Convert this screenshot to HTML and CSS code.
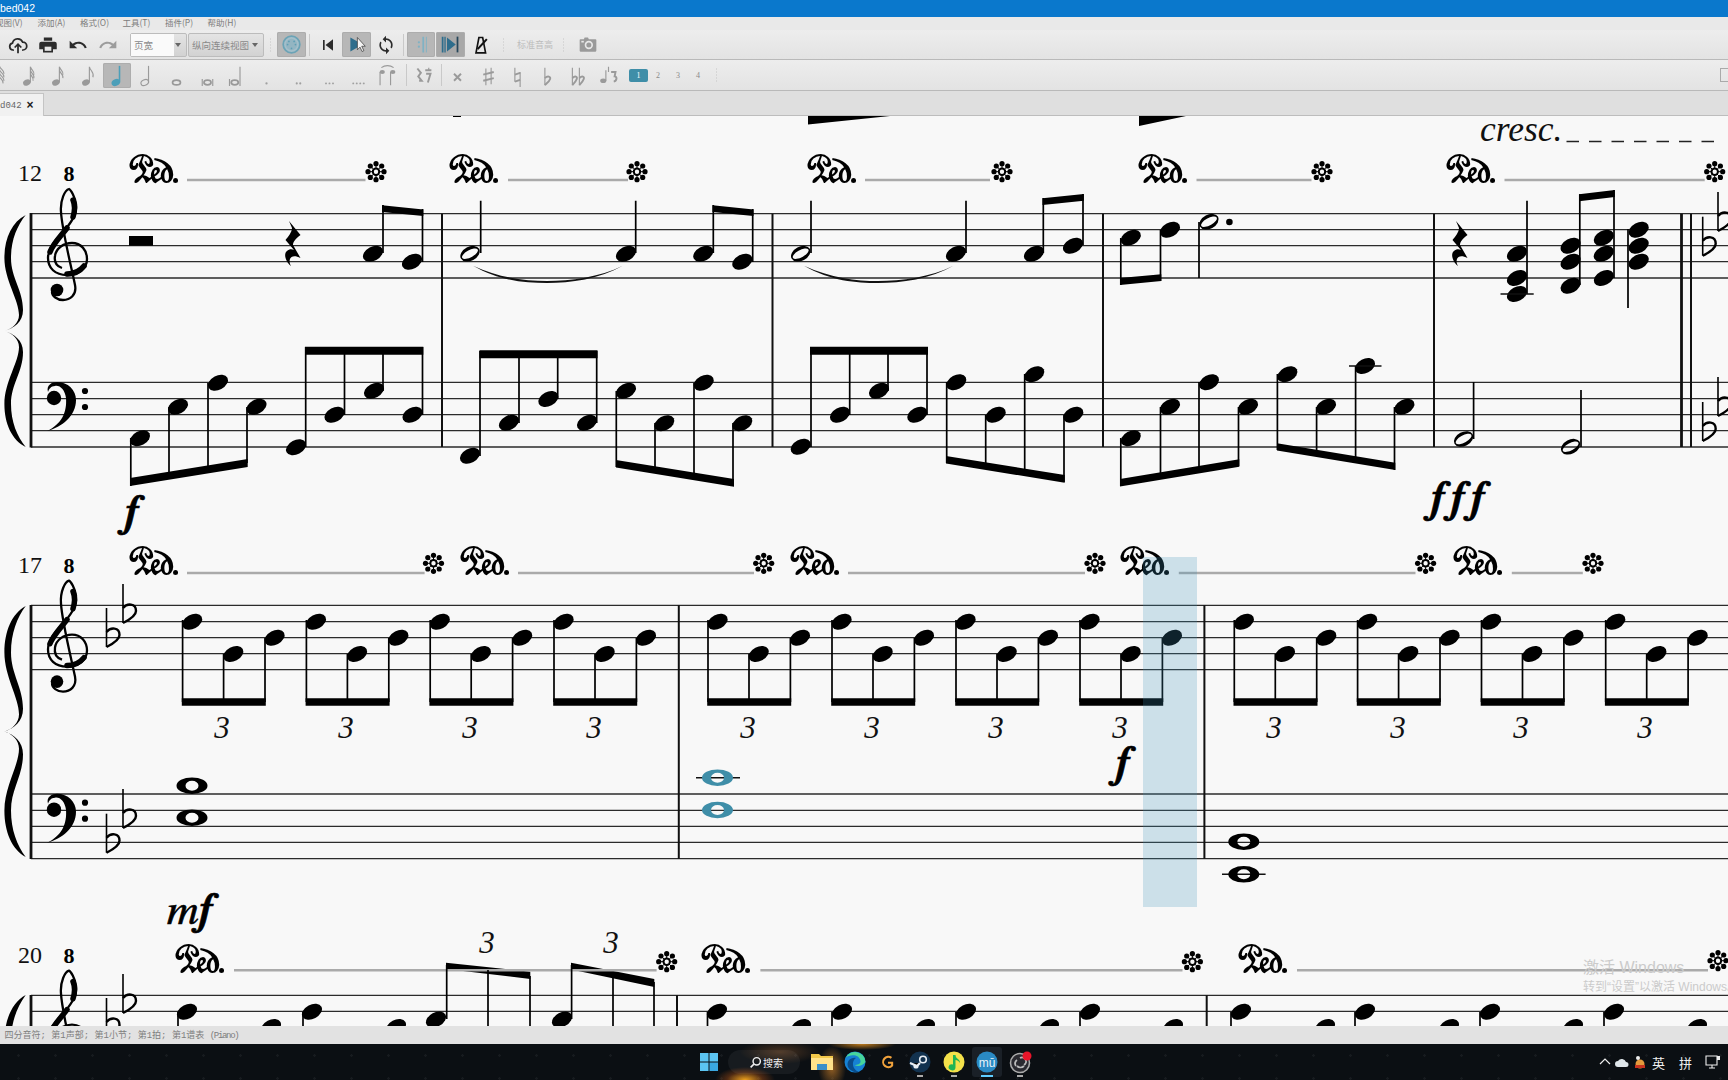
FILE: index.html
```html
<!DOCTYPE html>
<html lang="zh">
<head>
<meta charset="utf-8">
<title>MuseScore</title>
<link rel="stylesheet" href="styles.css">
</head>
<body>
<div class="app">
  <header class="titlebar"><span>bed042</span></header>
  <nav class="menubar">
    <span class="m m0">视图(V)</span><span class="m">添加(A)</span><span class="m">格式(O)</span><span class="m">工具(T)</span><span class="m">插件(P)</span><span class="m">帮助(H)</span>
  </nav>
  <div class="toolbar tb1">
    <div class="tb w30"><svg class="ic" viewBox="0 0 24 24"><path class="st" d="M7 18H6a4.2 4.2 0 0 1-.6-8.3A6.4 6.4 0 0 1 17.6 8.6 4.6 4.6 0 0 1 18 18h-1"/><path class="st" d="M12 22V11M8 15l4-4 4 4"/></svg></div>
    <div class="tb w30"><svg class="ic" viewBox="0 0 24 24"><path class="fd" d="M7 3h10v4H7zM4 8h16a2.500 2.500 0 0 1 2.500 2.500V17H18v4H6v-4H1.500v-6.500A2.500 2.500 0 0 1 4 8z"/><path class="fbg" d="M8 14h8v5H8z"/></svg></div>
    <div class="tb w30"><svg class="ic" viewBox="0 0 24 24"><path class="fd" d="M12.500 8c-2.650 0-5.050 1-6.900 2.600L2 7v9h9l-3.620-3.620c1.390-1.160 3.160-1.880 5.120-1.880 3.540 0 6.550 2.310 7.600 5.500l2.370-.78C21.080 11.030 17.150 8 12.500 8z"/></svg></div>
    <div class="tb w30"><svg class="ic" viewBox="0 0 24 24"><path class="fg" d="M18.400 10.600C16.550 9 14.150 8 11.500 8c-4.650 0-8.580 3.030-9.960 7.220L3.900 16c1.050-3.190 4.050-5.500 7.600-5.500 1.950 0 3.730.72 5.120 1.880L13 16h9V7l-3.600 3.600z"/></svg></div>
    <div class="combo c1"><span class="cinput">页宽</span><span class="carrow"></span></div>
    <div class="combo c2"><span class="ctext">纵向连续视图</span><span class="carrow"></span></div>
    <div class="handle w13"></div>
    <div class="tb w29 on"><svg class="ic big" viewBox="0 0 24 24"><circle cx="12" cy="12" r="9.500" fill="#a4bfca" stroke="#6ba3b6" stroke-width="2"/><circle cx="12" cy="12" r="6.500" fill="#93b5c2"/><g fill="#5f9fb5"><circle cx="7.500" cy="12" r="1"/><circle cx="16.500" cy="12" r="1"/><circle cx="9" cy="8.500" r="1"/><circle cx="15" cy="8.500" r="1"/><circle cx="12" cy="16.500" r="1"/></g></svg></div>
    <div class="sep w7"></div>
    <div class="tb w29"><svg class="ic" viewBox="0 0 24 24"><path class="fd" d="M6 6h2v12H6zM18 5v14L9 12z"/></svg></div>
    <div class="tb w29 on"><svg class="ic big" viewBox="0 0 24 24"><path fill="#2e6d8c" d="M5 4l14 8-14 8z"/><path fill="#f4f4f4" stroke="#333" stroke-width=".8" d="M13 4v14l3-3 2.400 5 2-1-2.400-5h4z"/></svg></div>
    <div class="tb w29"><svg class="ic" viewBox="0 0 24 24"><path class="fd" d="M12 4V1L8 5l4 4V6c3.310 0 6 2.690 6 6 0 1.010-.25 1.970-.7 2.800l1.460 1.460C19.540 15.030 20 13.570 20 12c0-4.420-3.580-8-8-8zm0 14c-3.310 0-6-2.690-6-6 0-1.010.25-1.970.7-2.800L5.240 7.740C4.460 8.970 4 10.430 4 12c0 4.420 3.580 8 8 8v3l4-4-4-4v3z"/></svg></div>
    <div class="sep w7"></div>
    <div class="tb w28 on"><svg class="ic big" viewBox="0 0 24 24"><path fill="#7fb2c4" d="M13 3h2v18h-2zM17 3h1v18h-1z"/><circle cx="9" cy="9.500" r="1.300" fill="#7fb2c4"/><circle cx="9" cy="14.500" r="1.300" fill="#7fb2c4"/></svg></div>
    <div class="tb w29 on dark"><svg class="ic big" viewBox="0 0 24 24"><path fill="#2e6d8c" d="M2 3h2v18H2zM5 3h1.500v18H5zM8 4l10 8-10 8z"/><path fill="#26465a" d="M19 3h2v18h-2z"/></svg></div>
    <div class="tb w31"><svg class="ic" viewBox="0 0 24 24"><path fill="none" stroke="#111" stroke-width="2" d="M6 21.500 9.500 3h4.500l3.500 18.500z"/><path stroke="#111" stroke-width="2.500" d="M8 17 19 5"/></svg></div>
    <div class="handle w14"></div>
    <div class="dis">标准音高</div>
    <div class="handle w21"></div>
    <div class="tb w27"><svg class="ic" viewBox="0 0 24 24"><path fill="#9a9a9a" d="M3 5h4l1-2h4l1 2h8a1 1 0 0 1 1 1v13a1 1 0 0 1-1 1H3a1 1 0 0 1-1-1V6a1 1 0 0 1 1-1z"/><circle cx="13" cy="12" r="5" fill="#e8e8e8"/><circle cx="13" cy="12" r="3" fill="#9a9a9a"/><path fill="#e8e8e8" d="M4 7h3v2H4z"/></svg></div>
  </div>
  <div class="toolbar tb2">
    <div class="tb w14 first"><svg class="ic2" viewBox="0 0 24 28"><path class="gst" d="M13 23V3M13 3c1 4 6 5 5 9M13 7c1 4 6 5 5 9M13 11c1 4 6 5 5 9M13 15c1 3 5 4 4 8"/></svg></div>
    <div class="tb w30"><svg class="ic2" viewBox="0 0 24 28"><ellipse class="hd" cx="9" cy="22" rx="4.500" ry="3.400" transform="rotate(-25 9 22)"/><path class="gst" d="M13 22V4M13 4c1 4 5 5 4 9M13 8c1 4 5 5 4 9M13 12c1 3 4 4 3 8"/></svg></div>
    <div class="tb w29"><svg class="ic2" viewBox="0 0 24 28"><ellipse class="hd" cx="9" cy="22" rx="4.500" ry="3.400" transform="rotate(-25 9 22)"/><path class="gst" d="M13 22V4M13 4c1 4 5 5 4 9M13 8c1 4 5 5 4 9"/></svg></div>
    <div class="tb w30"><svg class="ic2" viewBox="0 0 24 28"><ellipse class="hd" cx="9" cy="22" rx="4.500" ry="3.400" transform="rotate(-25 9 22)"/><path class="gst" d="M13 22V4M13 4c1 5 6 6 4 12"/></svg></div>
    <div class="tb w28 on"><svg class="ic2" viewBox="0 0 24 28"><ellipse cx="10" cy="22" rx="5" ry="3.800" transform="rotate(-25 10 22)" fill="#4c9fb9"/><path fill="none" stroke="#4c9fb9" stroke-width="1.800" d="M14.300 22V3"/></svg></div>
    <div class="tb w30"><svg class="ic2" viewBox="0 0 24 28"><ellipse class="hl" cx="10" cy="22" rx="4.500" ry="3.200" transform="rotate(-25 10 22)"/><path class="gst" d="M14.300 22V3"/></svg></div>
    <div class="tb w31"><svg class="ic2" viewBox="0 0 24 28"><ellipse cx="12" cy="22" rx="4.500" ry="2.800" fill="none" stroke="#999" stroke-width="2"/></svg></div>
    <div class="tb w30"><svg class="ic2" viewBox="0 0 24 28"><ellipse cx="12" cy="22" rx="4" ry="2.600" fill="none" stroke="#999" stroke-width="2"/><path class="gst" d="M6 18v8M18 18v8"/></svg></div>
    <div class="tb w29"><svg class="ic2" viewBox="0 0 24 28"><ellipse cx="10" cy="22" rx="4" ry="2.600" fill="none" stroke="#999" stroke-width="2"/><path class="gst" d="M4 18v8M16 4v22"/></svg></div>
    <div class="tb w31"><svg class="ic2" viewBox="0 0 24 28"><circle class="dt" cx="12" cy="23" r="1.300"/></svg></div>
    <div class="tb w32"><svg class="ic2" viewBox="0 0 24 28"><circle class="dt" cx="10" cy="23" r="1.200"/><circle class="dt" cx="14" cy="23" r="1.200"/></svg></div>
    <div class="tb w30"><svg class="ic2" viewBox="0 0 24 28"><circle class="dt" cx="8" cy="23" r="1.100"/><circle class="dt" cx="12" cy="23" r="1.100"/><circle class="dt" cx="16" cy="23" r="1.100"/></svg></div>
    <div class="tb w28"><svg class="ic2" viewBox="0 0 24 28"><circle class="dt" cx="6" cy="23" r="1.100"/><circle class="dt" cx="10" cy="23" r="1.100"/><circle class="dt" cx="14" cy="23" r="1.100"/><circle class="dt" cx="18" cy="23" r="1.100"/></svg></div>
    <div class="tb w30"><svg class="ic2" viewBox="0 0 24 28"><ellipse class="hd" cx="6" cy="10" rx="3" ry="2.400"/><ellipse class="hd" cx="18" cy="10" rx="3" ry="2.400"/><path class="gst" d="M3.500 10V25M15.500 10V25M5 5c4-3 10-3 14 0"/></svg></div>
    <div class="sep w8"></div>
    <div class="tb w26"><svg class="ic2" viewBox="0 0 24 28"><path class="gst thick" d="M5 6l4 5-3 4 4 5-3 0M14 8h7M15 12h5l-3 10"/><path class="gst" d="M18 5v3"/></svg></div>
    <div class="sep w10"></div>
    <div class="tb w22"><svg class="ic2" viewBox="0 0 24 28"><path class="gst thick" d="M8 12l8 8M16 12l-8 8"/></svg></div>
    <div class="tb w40"><svg class="ic2" viewBox="0 0 24 28"><path class="gst" d="M9 6v19M15 5v19"/><path class="gst thick" d="M6 13l12-3M6 20l12-3"/></svg></div>
    <div class="tb w18"><svg class="ic2" viewBox="0 0 24 28"><path class="gst" d="M9 5v16M15 10v17"/><path class="gst thick" d="M9 13l6-2M9 21l6-2"/></svg></div>
    <div class="tb w42"><svg class="ic2" viewBox="0 0 24 28"><path class="gst" d="M9 5v20"/><path class="gst thick" d="M9 17c3-3 7-2 6 1-1 3-4 5-6 7"/></svg></div>
    <div class="tb w20"><svg class="ic2" viewBox="0 0 24 28"><path class="gst" d="M5 5v20M13 5v20"/><path class="gst thick" d="M5 17c3-3 6-2 5 1-1 3-3 5-5 7M13 17c3-3 6-2 5 1-1 3-3 5-5 7"/></svg></div>
    <div class="tb w40"><svg class="ic2" viewBox="0 0 24 28"><ellipse class="hd" cx="6" cy="20" rx="3.500" ry="2.600"/><path class="gst" d="M9 20V8M12 4v6"/><path class="gst thick" d="M15 10h5l-1 5c3 0 3 5-1 6"/></svg></div>
    <div class="voice act">1</div>
    <div class="voice">2</div>
    <div class="voice">3</div>
    <div class="voice">4</div>
    <div class="handle w16"></div>
    <div class="tail"></div>
  </div>
  <div class="tabbar"><div class="tab"><span>d042</span><b>×</b></div></div>

  <main class="score">
    <svg class="sheet" viewBox="0 116 1728 910" width="1728" height="910">
      <defs>
        <g id="h"><ellipse rx="10.700" ry="7.100" transform="rotate(-28)"/></g>
        <g id="hh"><path fill-rule="evenodd" transform="rotate(-28)" d="M-10.300 0a10.300 7 0 1 0 20.600 0a10.300 7 0 1 0-20.600 0zM-8.800 .2a8.800 3.600 0 1 1 17.600-.4a8.800 3.600 0 1 1-17.600 .4z"/></g>
        <path id="w" fill-rule="evenodd" d="M-15.500 0a15.500 8.300 0 1 0 31 0a15.500 8.300 0 1 0-31 0zM-6.500 0a6.500 5 0 1 1 13 0a6.500 5 0 1 1-13 0z"/>
        <g id="flat"><path class="nf st16" d="M0 0V-39"/><path class="nf st26" d="M0-15C4-20 13-20 13-12C13-7 6-3 0 0"/></g>
        <g id="star">
          <circle cx="8" r="2.600"/><circle cx="5.700" cy="5.700" r="2.600"/><circle cy="8" r="2.600"/><circle cx="-5.700" cy="5.700" r="2.600"/><circle cx="-8" r="2.600"/><circle cx="-5.700" cy="-5.700" r="2.600"/><circle cy="-8" r="2.600"/><circle cx="5.700" cy="-5.700" r="2.600"/>
          <path class="nf st1" d="M-8 0H8M0-8V8M-5.700-5.700 5.700 5.700M-5.700 5.700 5.700-5.700"/>
          <circle class="hub" r="3.200"/>
        </g>
        <g id="treble">
          <path class="nf st25" d="M62 268C56 266 54 262 55 256C56 248 64 243 72 243C81 243 87 250 87 259C87 269 78 275 67 275C55 275 48 268 48 258C48 246 60 236 68 226C74 218 77 212 76 204C75 197 71 190 69 189C65 190 60 200 61 212C62 230 72 270 75 285C77 295 70 300 63 300C57 300 52 296 52 292"/>
          <path class="nf st6" d="M50 252C53 244 61 236 67 228M73 217C75 211 75 205 73 200M84 266C80 271 74 274 67 274"/>
          <circle cx="57" cy="290" r="6.300"/>
        </g>
        <g id="bass">
          <path d="M47 431C62 424 67 412 66 398C65 390 60 385 55 386C51 386 49 389 48 392C46 385 52 382 57 382C68 382 76 390 76 400C76 416 62 427 47 431Z"/>
          <circle cx="54" cy="398" r="7.200"/>
          <circle cx="85" cy="391" r="3.100"/><circle cx="85" cy="407" r="3.100"/>
        </g>
        <path id="brace" d="M25.700 215C12 222 4.400 238 4.400 258C4.400 280 19 300 19 315C19 323 12 329 4.400 331C12 333 19 339 19 347C19 362 4.400 382 4.400 404C4.400 424 12 440 25.700 447C17 436 11 422 11 404C11 384 23 372 23 352C23 340 14 334 4.400 331C14 328 23 322 23 310C23 290 11 278 11 258C11 240 17 226 25.700 215Z"/>
        <path id="qrest" d="M289 221L300.500 235C296 238 293 242 293 245L300.500 258C295 255 291 256 290 259C289 262 290 264 291 266C286 262 283 254 287 251C289 249 292 249 294 250L285.500 240C288 237 292 232 292 228Z"/>
        <g id="trip">
          <use href="#h" x="9.600" y="621.700"/><use href="#h" x="50.700" y="654"/><use href="#h" x="92" y="637.700"/>
          <path class="stem" d="M0 620V702M41 654V702M82.400 638V702"/>
          <path d="M-.8 698.300H83.200V705.700H-.8z"/>
        </g>
      </defs>

      <path class="staff" d="M31 213.700H1728M31 229.700H1728M31 245.700H1728M31 261.700H1728M31 278H1728M31 382.300H1728M31 398.700H1728M31 414.700H1728M31 430.700H1728M31 447H1728"/>
      <path class="bar" d="M442 213.700V447M772.500 213.700V447M1103 213.700V447M1434 213.700V447M1691 213.700V447"/>
      <path class="barb" d="M31 213V447.500M1681.500 213.700V447"/>
      <use href="#brace"/>
      <use href="#treble"/><use href="#bass"/>
      <text class="num" x="18" y="181">12</text>
      <text class="oct" x="69" y="181">8</text>

      <text class="cresc" x="1480" y="141">cresc.</text>
      <path class="dash" d="M1566.500 141.500H1715"/>
      <path d="M808 116H890L808 124.500zM1139 116H1186L1139 126zM453 116H461V117H453z"/>

      <text class="ped" x="128" y="207">&#x1D1AE;</text>
      <text class="ped" x="448" y="207">&#x1D1AE;</text>
      <text class="ped" x="806" y="207">&#x1D1AE;</text>
      <text class="ped" x="1137" y="207">&#x1D1AE;</text>
      <text class="ped" x="1444.600" y="207">&#x1D1AE;</text>
      <path class="pl" d="M187 180H365.500M508 180H628M865 180H990M1196.500 180H1311.500M1504.500 180H1704.700"/>
      <use href="#star" x="376" y="171.700"/><use href="#star" x="637" y="171.700"/><use href="#star" x="1002" y="171.700"/><use href="#star" x="1322" y="171.700"/><use href="#star" x="1714.700" y="171.700"/>

      <path d="M129 236H153V245.700H129z"/>
      <use href="#qrest"/><use href="#qrest" x="1167"/>

      <use href="#h" x="373" y="253.700"/><use href="#h" x="412" y="261.700"/>
      <use href="#hh" x="470" y="253.700"/><use href="#h" x="626" y="253.700"/><use href="#h" x="703.300" y="253.700"/><use href="#h" x="742.300" y="261.700"/>
      <use href="#hh" x="800.700" y="253.700"/><use href="#h" x="956" y="253.700"/><use href="#h" x="1034" y="253.700"/><use href="#h" x="1073" y="245.700"/>
      <use href="#h" x="1130.800" y="237.700"/><use href="#h" x="1170" y="229.700"/><use href="#hh" x="1209" y="221.700"/>
      <circle cx="1229.400" cy="222" r="3.300"/>
      <use href="#h" x="1517" y="253.700"/><use href="#h" x="1517" y="278"/><use href="#h" x="1517" y="294"/>
      <use href="#h" x="1570.600" y="245.700"/><use href="#h" x="1570.600" y="261.700"/><use href="#h" x="1570.600" y="285.700"/>
      <use href="#h" x="1603.800" y="237.700"/><use href="#h" x="1603.800" y="253.700"/><use href="#h" x="1603.800" y="278"/>
      <use href="#h" x="1638.700" y="229.700"/><use href="#h" x="1638.700" y="245.700"/><use href="#h" x="1638.700" y="261.700"/>

      <use href="#h" x="140" y="438.300"/><use href="#h" x="178" y="406.700"/><use href="#h" x="218" y="382.700"/><use href="#h" x="256.500" y="406.700"/>
      <use href="#h" x="296" y="447.300"/><use href="#h" x="334.500" y="414.700"/><use href="#h" x="374" y="390.700"/><use href="#h" x="412.500" y="414.700"/>
      <use href="#h" x="470" y="455.700"/><use href="#h" x="509" y="422.700"/><use href="#h" x="548.300" y="399"/><use href="#h" x="587" y="422.700"/>
      <use href="#h" x="626" y="390.700"/><use href="#h" x="664.300" y="423.300"/><use href="#h" x="703.700" y="382.700"/><use href="#h" x="742.300" y="423.300"/>
      <use href="#h" x="800.700" y="446.700"/><use href="#h" x="840" y="414.700"/><use href="#h" x="879" y="390.700"/><use href="#h" x="917.300" y="414.700"/>
      <use href="#h" x="956.300" y="382.300"/><use href="#h" x="995.700" y="414.700"/><use href="#h" x="1034.300" y="374.300"/><use href="#h" x="1073.300" y="414.700"/>
      <use href="#h" x="1130.800" y="438.300"/><use href="#h" x="1170" y="406.700"/><use href="#h" x="1209" y="382.300"/><use href="#h" x="1248" y="406.700"/>
      <use href="#h" x="1287.400" y="374.300"/><use href="#h" x="1326" y="406.700"/><use href="#h" x="1365" y="366"/><use href="#h" x="1404.400" y="406.700"/>
      <use href="#hh" x="1463.600" y="439"/><use href="#hh" x="1570.600" y="446.700"/>

      <path class="stem" d="M383 253V205M422.500 262V209M480.700 253V200.700M635.700 253V200.700M713.300 253V205M752.700 262V209M811 253V200.700M966 253V200.700M1043.300 253V198M1083 245V194M1120.800 238V285M1160.500 230V281M1199 222V278M1527 294V200.700M1579.800 285V194.300M1614 278V190M1628 229V308
      M130.800 438V486M169 407V474M208 383V468M247 407V463M305.700 447V347M344.500 415V350M383 391V350M422.500 415V347
      M480 456V351M519 423V352M557.700 399V352M596.700 423V351M616.300 391V467M655 423V470M694 383V476M733 423V486
      M811 447V347M849.700 415V350M888 391V350M927 415V347M946.700 382V463M985.700 415V468M1024.700 374V474M1064 415V482
      M1120.800 438V486M1160.500 407V478M1199 382V472M1238.500 407V466M1277.400 374V450M1316.600 407V456M1355.600 366V462M1394.500 407V470
      M1473.600 439V382M1581 447V390"/>
      <path class="led" d="M1349 366H1381.500M1500.500 294H1533.700"/>
      <path d="M382 205.300L423.300 209.500V216L382 212zM712.500 205.300L753.500 209.500V216L712.500 212zM1042.500 198.300L1083.800 194V200.700L1042.500 205zM1120 278L1161.300 274.300V281L1120 285zM1579 194.300L1614.800 190V197L1579 201.300z
      M130 478L247.700 459V467L130 486zM305 346.700H423.300V354.700H305zM479.500 350.300H597.500V358.300H479.500zM616 460L734 479V486.700L616 467.500zM810 346.700H928V354.700H810zM946 456L1064.700 475V482.700L946 463.500zM1120 479L1239.300 459.300V466.700L1120 486.500zM1277 443.300L1395.300 462.700V470L1277 450.500z"/>
      <path class="tie" d="M473 265.700C500 281 525 283 547 283C570 283 600 279 622.700 265.700C600 277 570 281 547 281C525 281 500 278 473 265.700Z"/>
      <path class="tie" d="M804 265.700C831 281 856 283 878 283C901 283 931 279 953.300 265.700C931 277 901 281 878 281C856 281 831 278 804 265.700Z"/>
      <use href="#flat" x="1702.700" y="255.700"/><use href="#flat" x="1718" y="231"/><use href="#flat" x="1718" y="416"/><use href="#flat" x="1702.700" y="441"/>
      <text class="gdyn" x="125" y="526">&#x1D191;</text>
      <text class="gdyn fff" x="1431" y="512">&#x1D191;&#x1D191;&#x1D191;</text>

      <!-- system 17 -->
      <path class="staff" d="M31 605.300H1728M31 621.700H1728M31 637.700H1728M31 653.700H1728M31 669.700H1728M31 794H1728M31 810.300H1728M31 826.300H1728M31 842.300H1728M31 858.700H1728"/>
      <path class="bar" d="M678.800 605.300V858.700M1204.400 605.300V858.700"/>
      <path class="barb" d="M31 605V859"/>
      <use href="#brace" transform="translate(0 606) scale(1 1.082) translate(0 -215)"/>
      <use href="#treble" y="391.600"/><use href="#bass" y="411.700"/>
      <text class="num" x="18" y="572.500">17</text>
      <text class="oct" x="69" y="573">8</text>
      <use href="#flat" x="106.500" y="647"/><use href="#flat" x="123" y="623"/><use href="#flat" x="106.500" y="852.700"/><use href="#flat" x="123" y="828"/>
      <text class="ped" x="128" y="599">&#x1D1AE;</text>
      <text class="ped" x="459" y="599">&#x1D1AE;</text>
      <text class="ped" x="789" y="599">&#x1D1AE;</text>
      <text class="ped" x="1118.600" y="599">&#x1D1AE;</text>
      <text class="ped" x="1452" y="599">&#x1D1AE;</text>
      <path class="pl" d="M187 573H424.600M518 573H754M848 573H1085M1178.800 573H1415.500M1511.800 573H1582.800"/>
      <use href="#star" x="433.500" y="563.300"/><use href="#star" x="763.700" y="563.300"/><use href="#star" x="1095" y="563.300"/><use href="#star" x="1425.600" y="563.300"/><use href="#star" x="1593" y="563.300"/>
      <use href="#trip" x="182.600"/><use href="#trip" x="306.400"/><use href="#trip" x="430.200"/><use href="#trip" x="554"/>
      <use href="#trip" x="708"/><use href="#trip" x="832"/><use href="#trip" x="956"/><use href="#trip" x="1080"/>
      <use href="#trip" x="1234.300"/><use href="#trip" x="1357.600"/><use href="#trip" x="1481.500"/><use href="#trip" x="1605.700"/>
      <text class="tri" x="222" y="738">3</text><text class="tri" x="346" y="738">3</text><text class="tri" x="470" y="738">3</text><text class="tri" x="594" y="738">3</text>
      <text class="tri" x="748" y="738">3</text><text class="tri" x="872" y="738">3</text><text class="tri" x="996" y="738">3</text><text class="tri" x="1120" y="738">3</text>
      <text class="tri" x="1274" y="738">3</text><text class="tri" x="1398" y="738">3</text><text class="tri" x="1521" y="738">3</text><text class="tri" x="1645" y="738">3</text>
      <use href="#w" x="192" y="785.700"/><use href="#w" x="192" y="817.700"/>
      <path class="led" d="M696 777.700H740M1222 874.300H1265.600"/>
      <use href="#w" class="teal" x="717.500" y="777.700"/><use href="#w" class="teal" x="717.500" y="810"/>
      <use href="#w" x="1243.800" y="841.700"/><use href="#w" x="1243.800" y="874.300"/>
      <text class="gdyn" x="1116" y="777">&#x1D191;</text>
      <text class="gdyn" x="167" y="924">&#x1D190;&#x1D191;</text>

      <!-- system 20 -->
      <path class="staff" d="M31 995.300H1728M31 1011.300H1728M31 1027.500H1728"/>
      <path class="bar" d="M677 995.300V1030M1206.700 995.300V1030"/>
      <path class="barb" d="M31 995V1030"/>
      <use href="#brace" transform="translate(0 995) scale(1 1.082) translate(0 -215)"/>
      <use href="#treble" y="781.600"/>
      <text class="num" x="18" y="963.300">20</text>
      <text class="oct" x="69" y="963">8</text>
      <use href="#flat" x="123" y="1013"/><use href="#flat" x="106.500" y="1037"/>
      <text class="ped" x="174.400" y="997">&#x1D1AE;</text>
      <text class="ped" x="700" y="997">&#x1D1AE;</text>
      <text class="ped" x="1236.600" y="997">&#x1D1AE;</text>
      <path d="M446 962.700L530.300 971.700V979L446 969zM571 962.700L654.300 979V987L571 969.500z"/>
      <path class="pl" d="M234 970.300H656.600M760.400 970.300H1182.500M1297 970.300H1708"/>
      <use href="#star" x="666.700" y="961.700"/><use href="#star" x="1192.400" y="961.700"/><use href="#star" x="1718" y="960.700"/>
      <text class="tri" x="487" y="953">3</text><text class="tri" x="611" y="953">3</text>
      <g>
        <use href="#h" x="187" y="1011.700"/><use href="#h" x="312" y="1011.700"/><use href="#h" x="271" y="1027"/><use href="#h" x="396" y="1027"/>
        <use href="#h" x="436" y="1019.500"/><use href="#h" x="562" y="1019.500"/>
        <use href="#h" x="717" y="1011.700"/><use href="#h" x="842" y="1011.700"/><use href="#h" x="966" y="1011.700"/><use href="#h" x="1090" y="1011.700"/>
        <use href="#h" x="801" y="1027"/><use href="#h" x="925" y="1027"/><use href="#h" x="1049" y="1027"/><use href="#h" x="1173" y="1027"/>
        <use href="#h" x="1241" y="1011.700"/><use href="#h" x="1365" y="1011.700"/><use href="#h" x="1490" y="1011.700"/><use href="#h" x="1614" y="1011.700"/>
        <use href="#h" x="1325" y="1027"/><use href="#h" x="1449" y="1027"/><use href="#h" x="1573" y="1027"/><use href="#h" x="1697" y="1027"/>
      </g>
      <path class="stem" d="M178 1012V1030M303 1012V1030M446.700 1019V965M488 970V1030M530 976V1030M571.600 1019V965M613 975V1030M654 982V1030M707.500 1012V1030M832 1012V1030M956 1012V1030M1080 1012V1030M1231 1012V1030M1355 1012V1030M1480 1012V1030M1604 1012V1030"/>

      <rect class="hilite" x="1143" y="557" width="54" height="350"/>
    </svg>
    <div class="wm"><p class="wm1">激活 Windows</p><p class="wm2">转到“设置”以激活 Windows。</p></div>
  </main>

  <footer class="status"><span>四分音符; 第1声部; 第1小节; 第1拍; 第1谱表 <span class="pi">(Piano)</span></span></footer>

  <div class="taskbar">
    <svg class="tk win" viewBox="0 0 18 18"><path fill="#5bc4f2" d="M0 0h8.500v8.500H0zM9.500 0H18v8.500H9.500zM0 9.500h8.500V18H0z"/><path fill="#3aa7e0" d="M9.500 9.500H18V18H9.500z"/></svg>
    <div class="search"><svg viewBox="0 0 16 16" width="13" height="13"><circle cx="9.500" cy="6.500" r="4.500" fill="none" stroke="#eee" stroke-width="1.800"/><path stroke="#eee" stroke-width="2" d="M6 10l-4 4"/></svg><span>搜索</span></div>
    <svg class="tk folder" viewBox="0 0 22 20"><path fill="#f2c84a" d="M0 2h8l2 2h12v14H0z"/><path fill="#ffe28a" d="M0 6h22v12H0z"/><path fill="#3a8fc8" d="M6 12h10v6H6z"/></svg>
    <svg class="tk edge" viewBox="0 0 22 22"><circle cx="11" cy="11" r="10.500" fill="#1682d4"/><path fill="#47d59a" d="M21.500 11a10.500 10.500 0 0 0-20-4c4-4 14-4 15 3 .5 3-3 4-6 4 3 2 8 1 11-3z"/><path fill="#0a4d8c" d="M4 16c-2-6 3-10 8-9-3 2-4 6-2 10 1 2 3 3 5 4-4 1-9-1-11-5z"/></svg>
    <svg class="tk gicon" viewBox="-5 -5 32 32"><path fill="none" stroke="#f0a23c" stroke-width="3" d="M16 5a7.500 7.500 0 1 0 1 11v-4h-6"/></svg>
    <svg class="tk steam" viewBox="0 0 22 22"><circle cx="11" cy="11" r="10.500" fill="#12324f"/><circle cx="14" cy="8.500" r="3.300" fill="none" stroke="#e8eef4" stroke-width="1.600"/><circle cx="7" cy="15" r="2.600" fill="#e8eef4"/><path stroke="#e8eef4" stroke-width="2.200" d="M1 12l7 3 3-3"/></svg>
    <svg class="tk music" viewBox="0 0 22 22"><circle cx="11" cy="11" r="10.500" fill="#f4e14a"/><path fill="#20b454" d="M10 4h2.500c0 4 5 4 4.500 8-1-2-3-3-4.500-3v7.500A3.500 3 0 1 1 10 13.500z"/></svg>
    <div class="mu"><svg viewBox="0 0 22 22" width="22" height="22"><circle cx="11" cy="11" r="10.500" fill="#2a8ac4"/><text x="11" y="15.500" class="mutext">mū</text></svg></div>
    <svg class="tk obs" viewBox="0 0 24 24"><circle cx="11" cy="13" r="9.500" fill="#2a2a30" stroke="#aaa" stroke-width="1.600"/><path fill="none" stroke="#bbb" stroke-width="1.800" d="M11 8a4 4 0 0 1 4 7M7 16a4 4 0 0 1 1-6M15 16a5 5 0 0 1-7 0"/><circle cx="18" cy="6" r="4.500" fill="#e8152a"/></svg>
    <div class="tray">
      <svg class="trayic t1" viewBox="0 0 12 12" width="12" height="12"><path fill="none" stroke="#eee" stroke-width="1.200" d="M1 8l5-5 5 5"/></svg>
      <svg class="trayic t2" viewBox="0 0 14 12" width="14" height="12"><path fill="#dfe6ea" d="M3 11a3 3 0 0 1 0-6 4.500 4.500 0 0 1 8 1 2.500 2.500 0 0 1 0 5z"/></svg>
      <svg class="trayic t3" viewBox="0 0 14 14" width="14" height="14"><circle cx="7" cy="9" r="4.500" fill="#e59a3c"/><circle cx="5" cy="3" r="2" fill="#eee"/><path fill="#c8341f" d="M2 10h10v3H2z"/></svg>
      <span class="ime i1">英</span>
      <span class="ime i2">拼</span>
      <svg class="trayic mon" viewBox="0 0 16 14" width="16" height="14"><path fill="none" stroke="#eee" stroke-width="1.100" d="M1 1h11v9H1zM4 13h6M7 10v3"/><path fill="#eee" d="M12 1h3v4h-3z"/></svg>
      <svg class="trayic spk" viewBox="0 0 10 14" width="10" height="14"><path fill="#eee" d="M1 5h2l3-3v10L3 9H1z"/></svg>
    </div>
  </div>
</div>
</body>
</html>
```

FILE: styles.css
```css
* { box-sizing: border-box; }
html, body { margin: 0; padding: 0; }
body { background: #0a0e12; font-family: "Noto Sans CJK SC", "Liberation Sans", sans-serif; }
.app { width: 1728px; height: 1080px; overflow: hidden; display: flex; flex-direction: column; }

.titlebar { height: 17px; background: #0a78cc; color: #fff; font: 10.5px/17px "Liberation Sans", sans-serif; flex: none; }

.menubar { height: 13px; background: #e9e9e9; display: flex; flex: none; padding-left: 37px; font-size: 8.500px; line-height: 11px; color: #7c7c7c; }
.m { width: 42.500px; white-space: nowrap; }
.m0 { margin-left: -42px; }

.toolbar { display: flex; align-items: center; flex: none; background: linear-gradient(#ededed, #e3e3e3); border-bottom: 1px solid #b9b9b9; }
.tb1 { height: 30px; padding-left: 3px; }
.tb2 { height: 31px; padding-left: 14px; }
.tb { height: 25px; display: flex; align-items: center; justify-content: center; flex: none; border-radius: 2px; }
.on { background: #b7b7b7; box-shadow: inset 0 0 0 1px #adadad; }
.on.dark { background: #a8a8a8; margin-left: 1px; }
.w7 { width: 7px; } .w8 { width: 8px; } .w10 { width: 10px; } .w13 { width: 13px; } .w14 { width: 14px; } .w16 { width: 16px; } .w18 { width: 18px; }
.w20 { width: 20px; } .w21 { width: 21px; } .w22 { width: 22px; } .w26 { width: 26px; } .w27 { width: 27px; } .w28 { width: 28px; } .w29 { width: 29px; }
.w30 { width: 30px; } .w31 { width: 31px; } .w32 { width: 32px; } .w40 { width: 40px; } .w42 { width: 42px; }

.ic { width: 20px; height: 20px; }
.ic.big { width: 21px; height: 21px; }
.ic2 { width: 21px; height: 25px; flex: none; }
.st { fill: none; stroke: #2a2a2a; stroke-width: 2.100; }
.fd { fill: #2c2c2c; }
.fg { fill: #9c9c9c; }
.fbg { fill: #e8e8e8; }
.gst { fill: none; stroke: #9a9a9a; stroke-width: 1.300; }
.gst.thick { stroke-width: 2.200; }
.hd { fill: #9a9a9a; }
.hl { fill: none; stroke: #9a9a9a; stroke-width: 1.300; }
.dt { fill: #a0a0a0; }
.first { margin-left: -14px; justify-content: flex-start; }
.first .ic2 { margin-left: -12px; }

.combo { height: 24px; display: flex; flex: none; align-items: center; border: 1px solid #bcbcbc; border-radius: 2px; background: linear-gradient(#e4e4e4, #d2d2d2); font-size: 9.500px; color: #8a8a8a; }
.c1 { width: 57px; margin-left: 7px; }
.c2 { width: 76px; margin-left: 1px; }
.cinput { width: 43px; height: 100%; background: #fafafa; padding-left: 3px; line-height: 23px; }
.ctext { flex: 1; padding-left: 3px; white-space: nowrap; }
.carrow { width: 0; height: 0; margin: 0 5px 0 auto; border: 3px solid transparent; border-top: 4px solid #666; border-bottom: 0; }
.sep { height: 22px; flex: none; background: linear-gradient(#c9c9c9, #c9c9c9) center/1px 100% no-repeat; }
.handle { height: 14px; flex: none; background: radial-gradient(circle, #c4c4c4 .7px, transparent 1px) center/3px 3px repeat-y; }
.dis { width: 36px; margin-left: 7px; flex: none; font-size: 9px; color: #bcbcbc; white-space: nowrap; }

.voice { width: 20px; height: 13px; flex: none; font: 8px/13px "Liberation Serif", serif; color: #8a8a8a; text-align: center; }
.voice.act { width: 19px; margin-left: 1px; background: #3f8ea8; color: #fff; border-radius: 2px; }
.tail { width: 8px; height: 14px; margin-left: auto; border: 1px solid #aaa; border-right: 0; }

.tabbar { height: 25px; flex: none; background: #dfdfdf; border-bottom: 1px solid #bdbdbd; padding-top: 2px; }
.tab { width: 44px; height: 23px; background: #f1f1f1; border: 1px solid #c4c4c4; border-left: 0; border-bottom: 0; font: 9px/25px "Liberation Mono", monospace; color: #666; display: flex; gap: 5px; }
.tab b { color: #222; font: bold 12px/22px "Liberation Sans", sans-serif; }

.score { position: relative; height: 910px; flex: none; overflow: hidden; background: #f8f8f8; }
.sheet { display: block; }
.staff { fill: none; stroke: #2b2b2b; stroke-width: 1.300; }
.bar { fill: none; stroke: #111; stroke-width: 2; }
.barb { fill: none; stroke: #111; stroke-width: 2.800; }
.stem { fill: none; stroke: #000; stroke-width: 1.700; }
.led { fill: none; stroke: #111; stroke-width: 1.500; }
.nf { fill: none; stroke: #000; }
.st1 { stroke-width: 1; }
.st16 { stroke-width: 1.600; }
.st25 { stroke-width: 2.300; }
.st26 { stroke-width: 2.400; }
.st6 { stroke-width: 5.500; stroke-linecap: round; }
.hub { fill: #f8f8f8; stroke: #000; stroke-width: 2; }
.tie { fill: #111; }
.teal { fill: #3f8ea8; }
.pl { fill: none; stroke: #aaa; stroke-width: 2.500; }
.dash { fill: none; stroke: #222; stroke-width: 1.500; stroke-dasharray: 12.500 10; }
.num { font: 24px "Liberation Serif", serif; fill: #111; }
.oct { font: bold 22px "Liberation Serif", serif; text-anchor: middle; fill: #000; }
.ped { font: 78px "DejaVu Sans", "Noto Sans", serif; fill: #000; }
.gdyn { font: 44px "DejaVu Sans", "Noto Sans", serif; fill: #000; stroke: #000; stroke-width: .7; }
.fff { letter-spacing: 5px; }
.cresc { font: italic 35.500px "Liberation Serif", serif; fill: #111; }
.tri { font: italic 31px "Liberation Serif", serif; text-anchor: middle; fill: #111; }
.hilite { fill: rgba(60, 145, 185, .23); }
.wm { position: absolute; left: 1583px; top: 842px; color: #cbcbcb; white-space: nowrap; font-family: "Liberation Sans", "Noto Sans CJK SC", sans-serif; }
.wm p { margin: 0; }
.wm1 { font-size: 16px; line-height: 20px; }
.wm2 { font-size: 12px; line-height: 18px; margin-top: 2px; }

.status { height: 18px; flex: none; background: #e2e2e2; padding: 1px 0 0 4.500px; font: 9px/18px "Liberation Mono", "Noto Sans CJK SC", monospace; color: #7e7e7e; white-space: pre; }
.pi { letter-spacing: -1.300px; }

.taskbar { height: 36px; flex: none; display: flex; align-items: center; padding-left: 700px;
  background:
    linear-gradient(#aaa, #aaa) 917px 31px/6px 2px no-repeat,
    linear-gradient(#aaa, #aaa) 951px 31px/6px 2px no-repeat,
    linear-gradient(#aaa, #aaa) 1017px 31px/6px 2px no-repeat,
    radial-gradient(ellipse 30px 13px at 745px 100%, rgba(250,170,30,.95), rgba(200,90,20,.35) 60%, transparent 100%),
    radial-gradient(ellipse 34px 6px at 862px 0, rgba(220,140,30,.85), transparent 100%),
    radial-gradient(ellipse 14px 22px at 832px 24px, rgba(190,120,40,.75), transparent 100%),
    radial-gradient(ellipse 40px 12px at 780px 8px, rgba(150,95,50,.45), transparent 100%),
    radial-gradient(circle, rgba(255,255,255,.05) 1px, transparent 1.500px) 0 0/37px 23px,
    #0b0f13; }
.tk { flex: none; width: 22px; height: 22px; }
.win { width: 18px; height: 18px; }
.search { width: 72px; height: 24px; margin-left: 10px; margin-right: 11px; flex: none; border-radius: 12px; display: flex; align-items: center; padding-left: 21px; gap: 1px; color: #f0f0f0; font-size: 10px; background: rgba(255,255,255,.05); }
.edge, .gicon { margin-left: 11px; }
.steam { margin-left: 10px; }
.music { margin-left: 12px; }
.mu { width: 30px; height: 30px; margin-left: 7px; flex: none; border-radius: 3px; display: flex; align-items: center; justify-content: center; background: linear-gradient(#60cdff, #60cdff) center bottom/12px 2px no-repeat, #1a2027; }
.mutext { font: 12px "Liberation Sans", sans-serif; fill: #e8f4fa; text-anchor: middle; }
.obs { margin-left: 7px; width: 24px; height: 24px; }
.tray { margin-left: auto; margin-right: -9px; display: flex; align-items: center; color: #f0f0f0; }
.trayic { flex: none; margin-right: 6px; }
.t1 { margin-right: 4px; }
.t2 { margin-right: 4px; }
.t3 { margin-right: 4px; }
.ime { font-size: 13px; flex: none; }
.i1 { margin-left: 1px; }
.i2 { margin-left: 14px; margin-right: 13px; }
.spk { margin-right: 0; }
```
